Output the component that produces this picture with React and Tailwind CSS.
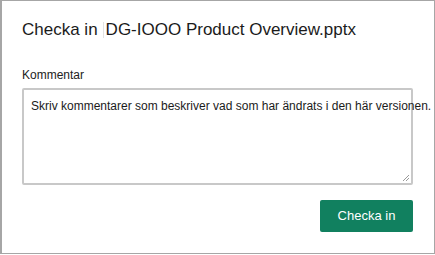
export default function App() {
  return (
    <div className="w-[435px] h-[255px] bg-white font-['Liberation_Sans',Arial,sans-serif]">
      <div className="h-[254px] border border-l-2 border-[#a6a6a6] flex flex-col pl-[20px] pr-[21px]">
        {/* Title */}
        <h1 className="mt-[19px] text-[17px] leading-[20px] text-[#1b1b1b] flex items-center whitespace-nowrap">
          <span>Checka in</span>
          <span className="ml-[5px] mr-[2px] w-px h-[16px] bg-[#e2e2e2]" />
          <span>DG-IOOO Product Overview.pptx</span>
        </h1>

        {/* Comment */}
        <label className="mt-[28px] text-[12px] leading-[14px] text-[#222]">Kommentar</label>
        <div className="relative mt-[6px] h-[97px] border-2 border-[#c8c8c8] rounded-[2px]">
          <div className="pl-[7px] pt-[9px] text-[12px] leading-[14px] text-[#1b1b1b] whitespace-nowrap">
            Skriv kommentarer som beskriver vad som har ändrats i den här versionen.
          </div>
          <svg className="absolute right-[1px] bottom-[1px]" width="8" height="8" viewBox="0 0 8 8">
            <path d="M7 1 L1 7 M7 4 L4 7" stroke="#9a9a9a" strokeWidth="1" />
          </svg>
        </div>

        {/* Actions */}
        <div className="flex justify-end mt-[15px]">
          <button className="w-[93px] h-[32px] bg-[#11805f] rounded-[2px] text-white text-[13px]">
            Checka in
          </button>
        </div>
      </div>
    </div>
  );
}
